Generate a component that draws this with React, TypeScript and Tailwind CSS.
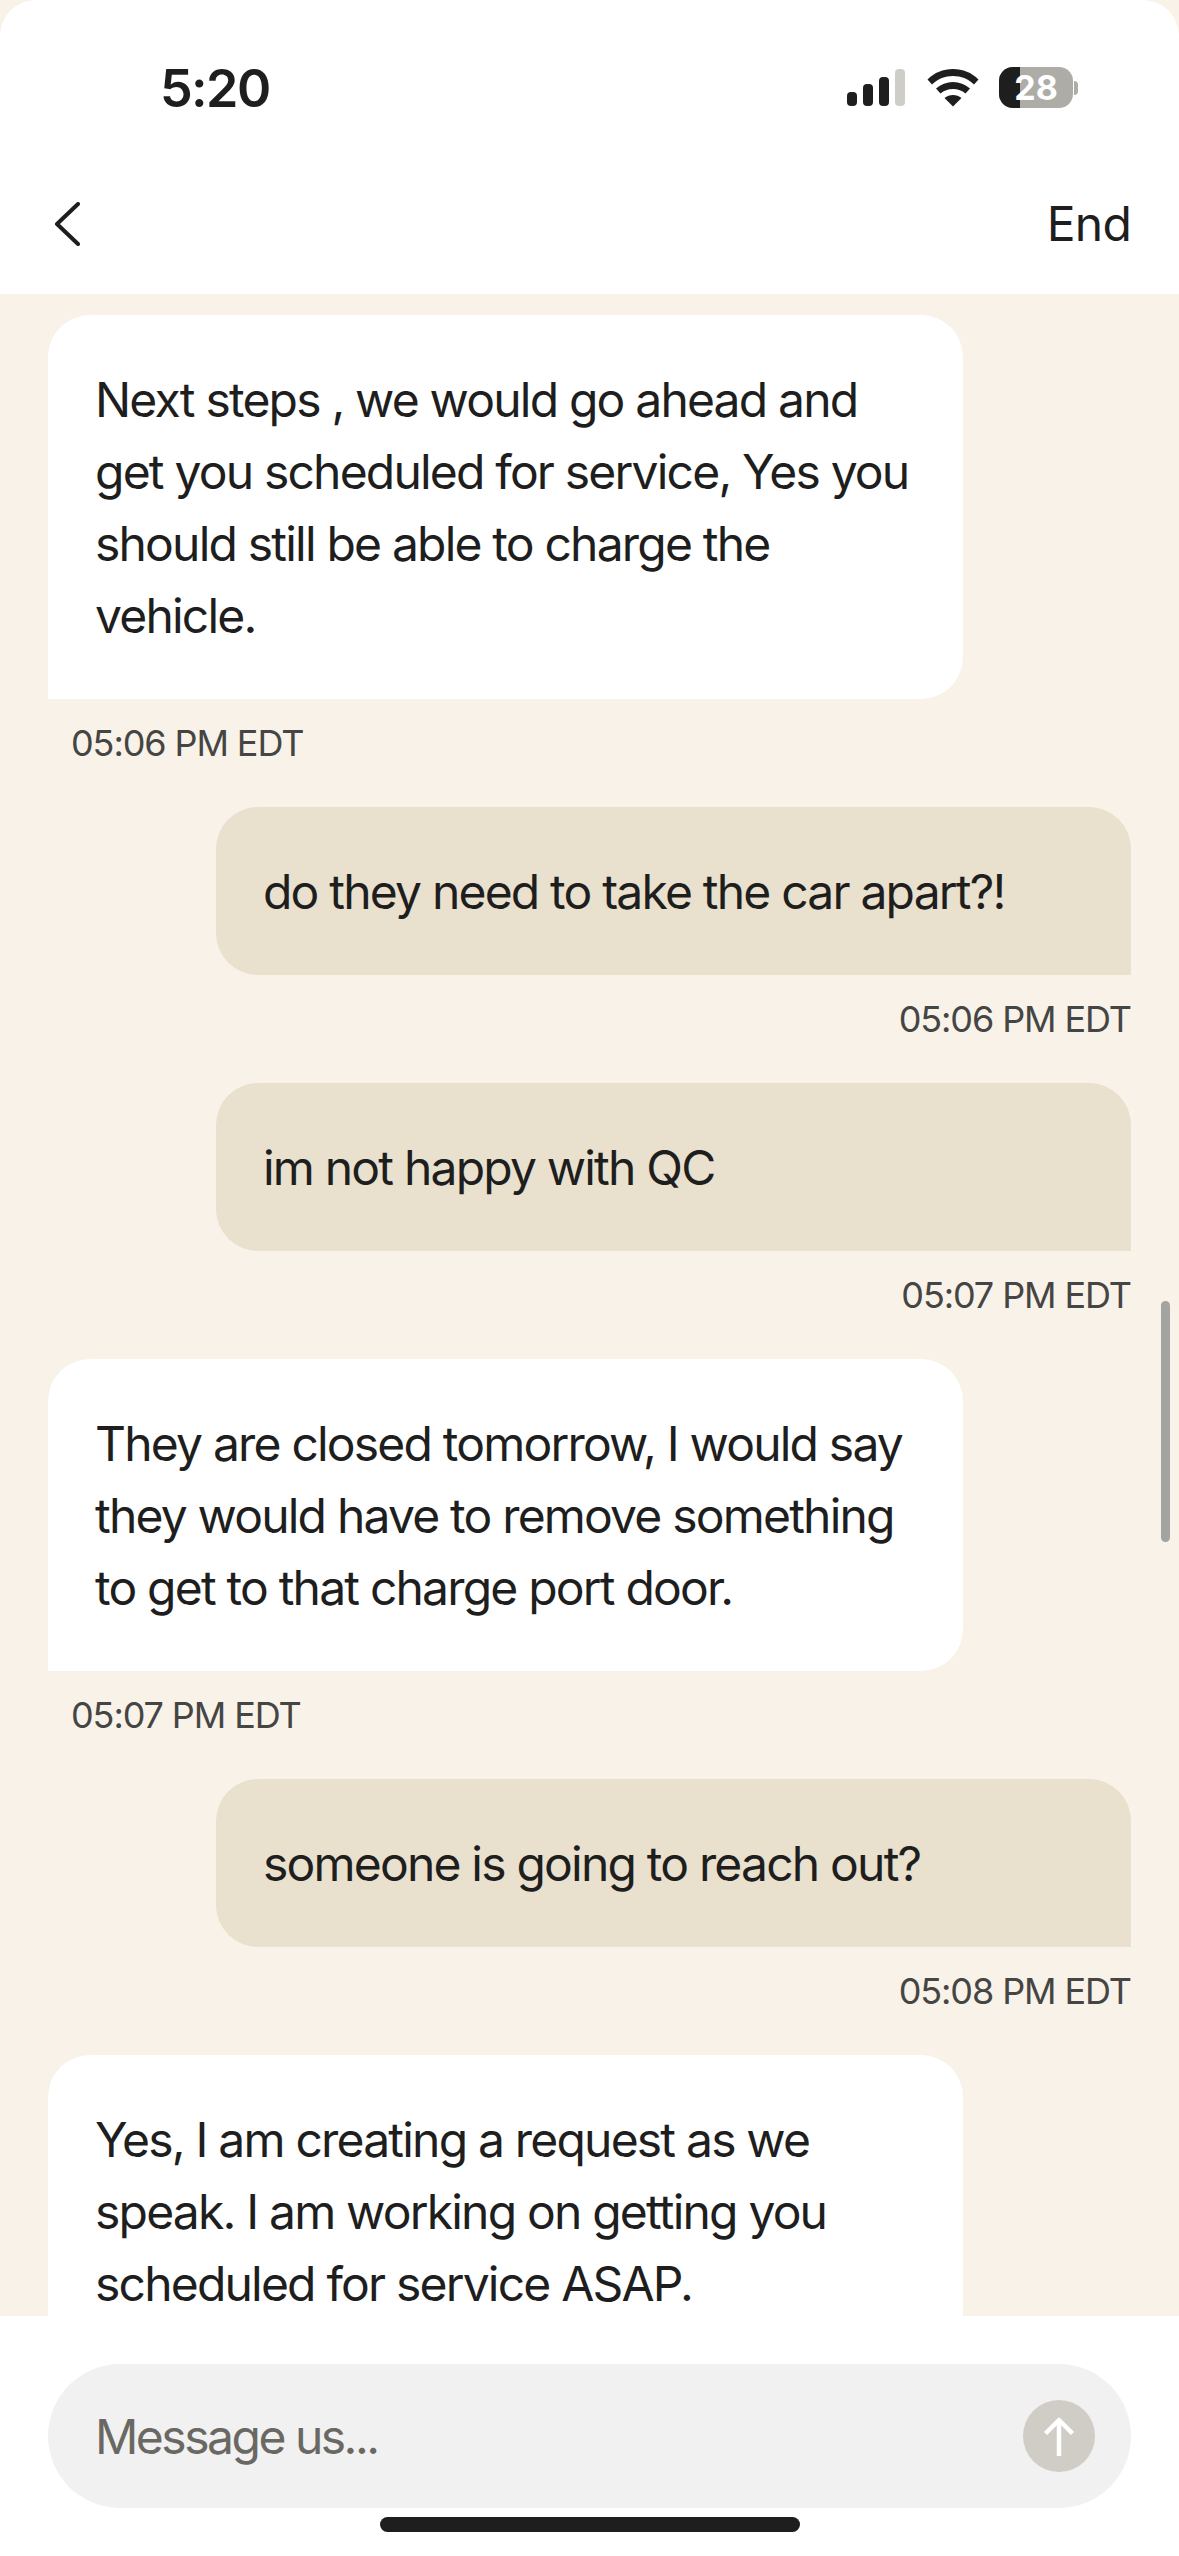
const font = { fontFamily: '"Inter", "Liberation Sans", sans-serif' };

function Time({ children, right }: { children: string; right?: boolean }) {
  return (
    <div className={`text-[36px] leading-[44px] tracking-[-1.1px] text-[#454543] ${right ? 'text-right mt-[22px]' : 'pl-[23px] mt-[22px]'}`}>
      {children}
    </div>
  );
}

function Agent({ lines, time, mt }: { lines: string[]; time?: string; mt: string }) {
  return (
    <div className={mt}>
      <div className="w-[915px] bg-white rounded-t-[42px] rounded-br-[42px] pl-[47px] pr-[48px] pt-[48px] pb-[48px] text-[48px] leading-[72px] tracking-[-1.8px] text-[#1e1e1e]">
        {lines.map((l) => (
          <div key={l} className="whitespace-nowrap h-[72px] relative top-[1px]">{l}</div>
        ))}
      </div>
      {time && <Time>{time}</Time>}
    </div>
  );
}

function User({ text, time }: { text: string; time: string }) {
  return (
    <div className="mt-[42px] flex flex-col items-end">
      <div className="w-[915px] h-[168px] pt-[2px] flex items-center bg-[#e9e0cd] rounded-t-[42px] rounded-bl-[42px] pl-[47px] pr-[48px] text-[48px] leading-[72px] tracking-[-1.8px] text-[#1e1e1e] whitespace-nowrap">
        {text}
      </div>
      <Time right>{time}</Time>
    </div>
  );
}

export default function App() {
  return (
    <div style={font} className="relative w-[1179px] h-[2556px] bg-[#f8f2e9] flex flex-col overflow-hidden">
      <div className="h-[294px] shrink-0 bg-white rounded-t-[36px] flex flex-col">
        <div className="h-[176px] flex items-start justify-between pt-[59px] pl-[160px] pr-[96px]">
          <div className="text-[52px] leading-[60px] font-semibold text-[#1e1e1e] tracking-[-1.6px]">5:20</div>
          <div className="flex items-center gap-[22px] mt-[8px]">
            <svg width="58" height="38" viewBox="0 0 58 38">
              <rect x="0" y="23" width="10" height="14" rx="4" fill="#1e1e1e" />
              <rect x="16" y="15" width="10" height="22" rx="4" fill="#1e1e1e" />
              <rect x="32" y="8" width="10" height="29" rx="4" fill="#1e1e1e" />
              <rect x="48" y="0" width="10" height="37" rx="4" fill="#cfcdc8" />
            </svg>
            <svg width="52" height="38" viewBox="0 0 52 38">
              <path d="M26 0C16 0 7.500 3.500 0.500 10.500L5 15.500C11 9.800 18 7 26 7S41 9.800 47 15.500L51.500 10.500C44.500 3.500 36 0 26 0Z" fill="#1e1e1e" />
              <path d="M26 13C19.500 13 14 15.300 9 19.500L13.500 24.500C17 21.500 21 20 26 20S35 21.500 38.500 24.500L43 19.500C38 15.300 32.500 13 26 13Z" fill="#1e1e1e" />
              <path d="M26 26C22.800 26 20 27 17.500 29L26 37.500L34.500 29C32 27 29.200 26 26 26Z" fill="#1e1e1e" />
            </svg>
            <div className="relative w-[84px] h-[41px] flex items-center -ml-[2px]">
              <div className="w-[74px] h-[41px] rounded-[14px] overflow-hidden bg-[#aeaca7]">
                <div className="w-[21px] h-full bg-[#1e1e1e]" />
              </div>
              <div className="w-[4px] h-[14px] ml-[1px] rounded-r-full bg-[#aeaca7]" />
              <div className="absolute left-[15px] w-[44px] top-0 h-[41px] flex items-center justify-center text-[34px] font-bold text-white leading-none">28</div>
            </div>
          </div>
        </div>
        <div className="flex-1 flex items-start justify-between pl-[54px] pr-[48px]">
          <svg width="26" height="44" viewBox="0 0 26 44" className="mt-[26px]" fill="none" stroke="#1e1e1e" strokeWidth="4" strokeLinecap="round" strokeLinejoin="round">
            <path d="M24 2L3 22L24 42" />
          </svg>
          <div className="text-[48px] leading-[56px] tracking-[-0.8px] text-[#1e1e1e] mt-[20px]">End</div>
        </div>
      </div>

      <div className="flex-1 min-h-0 overflow-hidden bg-[#f8f2e9] px-[48px] pt-[21px]">
        <Agent mt="mt-0" lines={['Next steps , we would go ahead and', 'get you scheduled for service, Yes you', 'should still be able to charge the', 'vehicle.']} time="05:06 PM EDT" />
        <User text="do they need to take the car apart?!" time="05:06 PM EDT" />
        <User text="im not happy with QC" time="05:07 PM EDT" />
        <Agent mt="mt-[42px]" lines={['They are closed tomorrow, I would say', 'they would have to remove something', 'to get to that charge port door.']} time="05:07 PM EDT" />
        <User text="someone is going to reach out?" time="05:08 PM EDT" />
        <Agent mt="mt-[42px]" lines={['Yes, I am creating a request as we', 'speak. I am working on getting you', 'scheduled for service ASAP.']} />
      </div>

      <div className="h-[240px] shrink-0 bg-white px-[48px] pt-[48px]">
        <div className="h-[144px] rounded-[72px] bg-[#f1f1f1] flex items-center justify-between pl-[47px] pr-[36px]">
          <span className="text-[48px] tracking-[-2.5px] text-[#6a6863] relative top-[1px]">Message us...</span>
          <div className="w-[72px] h-[72px] rounded-full bg-[#cfcdc6] flex items-center justify-center">
            <svg width="32" height="40" viewBox="0 0 32 40" fill="none" stroke="#fff" strokeWidth="4.500" strokeLinejoin="round">
              <path d="M16 40V4M2.500 17.500L16 4L29.500 17.500" />
            </svg>
          </div>
        </div>
        <div className="mt-[9px] mx-auto w-[420px] h-[15px] rounded-full bg-[#1e1e1e]" />
      </div>

      <div className="absolute left-[1161px] top-[1301px] w-[9px] h-[241px] rounded-full bg-[#a3a3a1]" />
    </div>
  );
}
